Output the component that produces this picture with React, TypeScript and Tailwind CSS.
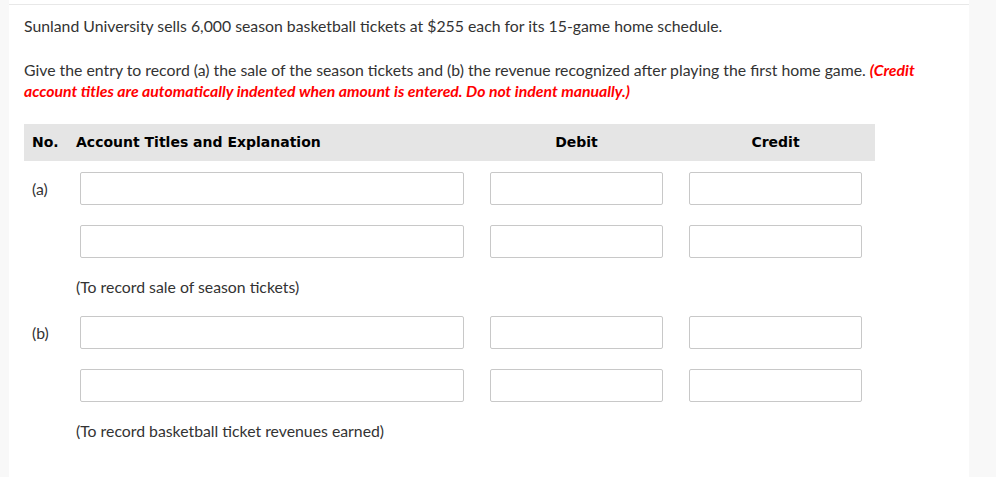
import React from 'react';

const Field: React.FC<{ w: string }> = ({ w }) => (
  <input type="text" className={`${w} h-[33px] rounded-[2px] border border-[#c8c8c8] bg-white outline-none`} />
);

const EntryRow: React.FC<{ label?: string }> = ({ label }) => (
  <div className="flex items-center h-[33px]">
    <div className="w-[56px] pl-2 text-[15.8px] text-[#333]">{label}</div>
    <div className="w-[410px]">
      <Field w="w-[384px]" />
    </div>
    <div className="w-[199px]">
      <Field w="w-[173px]" />
    </div>
    <div className="w-[173px]">
      <Field w="w-[173px]" />
    </div>
  </div>
);

const App: React.FC = () => {
  const entries = [
    { label: '(a)', note: '(To record sale of season tickets)' },
    { label: '(b)', note: '(To record basketball ticket revenues earned)' },
  ];

  return (
    <div className="min-h-[477px] bg-[#f8f8f8] pl-[9px] pr-[27px]" style={{ fontFamily: 'Lato, "Open Sans", sans-serif' }}>
      <div className="min-h-[477px] bg-white pt-1">
        <div className="border-t border-[#e8e8e8] px-[15px] pt-[10px] text-[#333]">
          <p className="text-[15.8px] leading-[21px]">
            Sunland University sells 6,000 season basketball tickets at $255 each for its 15-game home schedule.
          </p>
          <p className="mt-[23px] text-[15.8px] leading-[21px]">
            Give the entry to record (a) the sale of the season tickets and (b) the revenue recognized after playing the first home game.{' '}
            <span className="font-bold italic text-[#ff0000]">
              (Credit account titles are automatically indented when amount is entered. Do not indent manually.)
            </span>
          </p>

          <div className="mt-[23px] w-[851px]">
            <div
              className="flex items-center h-[37px] bg-[#e5e5e5] text-[14px] font-bold text-black"
              style={{ fontFamily: 'Verdana, "DejaVu Sans", sans-serif' }}
            >
              <div className="w-[52px] pl-2">No.</div>
              <div className="w-[414px]">Account Titles and Explanation</div>
              <div className="w-[199px]"><div className="w-[173px] text-center">Debit</div></div>
              <div className="w-[173px] text-center">Credit</div>
            </div>

            {entries.map((e, i) => (
              <div key={i} className={i === 0 ? 'pt-[11px]' : 'pt-[19px]'}>
                <EntryRow label={e.label} />
                <div className="mt-5">
                  <EntryRow />
                </div>
                <p className="pl-[52px] mt-[18px] text-[15.8px] leading-[21px] text-[#333]">{e.note}</p>
              </div>
            ))}
          </div>
        </div>
      </div>
    </div>
  );
};

export default App;
